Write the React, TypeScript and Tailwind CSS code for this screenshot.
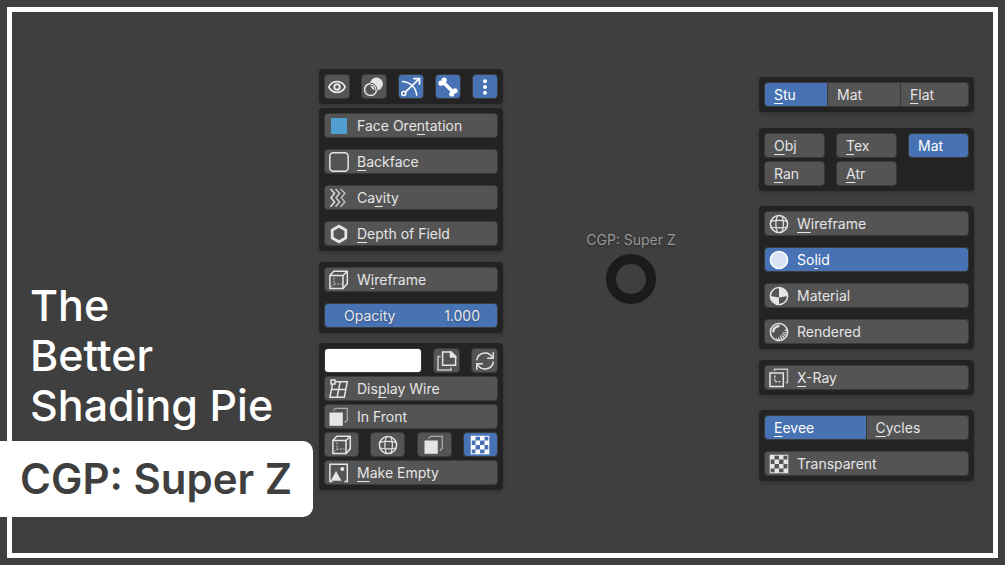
import type { ReactNode } from 'react';
import { useState } from 'react';
import clsx from 'clsx';

function Icon({ children }: { children: ReactNode }) {
  return (
    <svg
      viewBox="0 0 20 20"
      className="size-5 shrink-0"
      fill="none"
      stroke="currentColor"
      strokeWidth="1.5"
      aria-hidden="true"
    >
      {children}
    </svg>
  );
}

const EyeIcon = () => (
  <Icon>
    <path
      d="M1.8 10C3.6 6.4 6.6 4.7 10 4.7S16.4 6.4 18.2 10C16.4 13.6 13.4 15.3 10 15.3S3.6 13.6 1.8 10Z"
      strokeWidth="1.7"
    />
    <circle cx="10" cy="10" r="2.7" strokeWidth="2" />
  </Icon>
);

const OverlayIcon = () => (
  <Icon>
    <clipPath id="overlay-disc">
      <circle cx="12.5" cy="7" r="6.4" />
    </clipPath>
    <circle cx="6.6" cy="12.6" r="6" />
    <circle cx="12.5" cy="7" r="6.4" fill="currentColor" stroke="none" />
    <circle cx="6.6" cy="12.6" r="6.3" stroke="#545454" strokeWidth="1" clipPath="url(#overlay-disc)" />
    <circle cx="6.6" cy="12.6" r="4.3" stroke="#545454" strokeWidth="1" clipPath="url(#overlay-disc)" />
  </Icon>
);

const GizmoIcon = () => (
  <Icon>
    <path d="M.8 4.5C9 4.8 15.2 10 15.7 18.8" />
    <circle cx="2.8" cy="16.6" r="2" />
    <path d="M4.3 15.1 18 2M12.3 1.6H18.5V7.8" strokeWidth="1.7" />
  </Icon>
);

const BoneIcon = () => (
  <Icon>
    <path d="M4.5 4.5 15.5 15.5" strokeWidth="3.6" />
    <g fill="currentColor" stroke="none">
      <circle cx="6.2" cy="3" r="2.6" />
      <circle cx="3" cy="6.2" r="2.6" />
      <circle cx="17" cy="13.8" r="2.6" />
      <circle cx="13.8" cy="17" r="2.6" />
    </g>
  </Icon>
);

const DotsIcon = () => (
  <Icon>
    <g fill="currentColor" stroke="none">
      <circle cx="10" cy="4.3" r="2" />
      <circle cx="10" cy="10" r="2" />
      <circle cx="10" cy="15.7" r="2" />
    </g>
  </Icon>
);

const SwatchIcon = () => (
  <Icon>
    <rect x="2" y="2" width="16" height="16" fill="#519fd0" stroke="none" />
  </Icon>
);

const BackfaceIcon = () => (
  <Icon>
    <rect x=".8" y=".8" width="18.4" height="18.4" rx="3.5" />
  </Icon>
);

const CavityIcon = () => (
  <Icon>
    <path d="M1.5 1 5.6 5.3 2 9.7 5.6 14 1.5 18.8" />
    <path d="M6.5 1 10.6 5.3 7 9.7 10.6 14 6.5 18.8" opacity=".85" />
    <path d="M11.5 1 15.9 5.3 12.3 9.7 15.9 14 11.5 18.8" opacity=".7" />
  </Icon>
);

const HexagonIcon = () => (
  <Icon>
    <path d="M10 2.2 16.8 6.1V13.9L10 17.8 3.2 13.9V6.1Z" strokeWidth="2.8" />
  </Icon>
);

const CubeIcon = () => (
  <Icon>
    <path d="M.9 5.5H14V18.5H.9ZM.9 5.5 4.7 1.3H18.3V13.6L14 18.5M14 5.5 18.3 1.3" />
    <path d="M5 7.5V14H12.5M5 14 2 17.2" strokeWidth="1" strokeDasharray="2 1.2" opacity=".8" />
  </Icon>
);

const CopyIcon = () => (
  <Icon>
    <path d="M5.6 1H14.2L18.6 5.4V14.2H5.6Z" />
    <path d="M13.5 1V6.1H18.6Z" fill="currentColor" />
    <path d="M3.5 5.5H1V19H14V16.5" opacity=".8" />
  </Icon>
);

const RefreshIcon = () => (
  <Icon>
    <path d="M1.7 9.4A8.3 8.3 0 0 1 17.3 6.5M18.3 10.6A8.3 8.3 0 0 1 2.7 13.5" />
    <path d="M18.2 1.3V7.3H12.2M1.8 18.7V12.7H7.8" />
  </Icon>
);

const LatticeIcon = () => (
  <Icon>
    <path d="M4 2.7H18.3L15.3 18.3H.9ZM11.2 2.7 8.1 18.3M2.5 10.5H16.8" />
    <rect x="2" y="1" width="4" height="4" fill="#545454" />
  </Icon>
);

const FrontIcon = () => (
  <Icon>
    <rect x=".5" y="5.5" width="13.3" height="13.3" fill="currentColor" stroke="none" />
    <path d="M4.5 3.6 6.5 1.3H18.3V13L15.7 15.7" strokeWidth="1.3" opacity=".6" />
  </Icon>
);

const GlobeIcon = () => (
  <Icon>
    <circle cx="10" cy="10" r="8.6" />
    <path
      d="M8.6 1.5C6.2 6 6.2 14 8.6 18.5M13 1.9C14.6 6.5 14.6 13.5 13 18.1M1.8 7.3C6 6.3 14 6.3 18.2 7.3M1.9 13C6 13.9 14 13.9 18.1 13"
      strokeWidth="1.2"
    />
  </Icon>
);

const SolidIcon = () => (
  <Icon>
    <circle cx="10" cy="10" r="8.6" fill="#d9e2f2" />
  </Icon>
);

const MaterialIcon = () => (
  <Icon>
    <circle cx="10" cy="10" r="8.6" />
    <path d="M10 1.4A8.6 8.6 0 0 1 18.6 10L10 11.6Z" fill="currentColor" stroke="none" />
    <path d="M1.4 10 10 11.6V18.6A8.6 8.6 0 0 1 1.4 10Z" fill="currentColor" stroke="none" />
  </Icon>
);

const RenderedIcon = () => (
  <Icon>
    <circle cx="10" cy="10" r="8.6" />
    <path d="M4.2 9.5C4.6 6.7 6.6 4.7 9.5 4.2" strokeWidth="2.2" strokeLinecap="round" />
    <path d="M17 7.5C17 13 13 17 7.5 17" strokeWidth="2.6" strokeDasharray="1.2 1.2" />
    <path d="M14.6 10.5C14 12.7 12.7 14 10.5 14.6" strokeWidth="1.4" strokeDasharray="1 1.2" />
  </Icon>
);

const XrayIcon = () => (
  <Icon>
    <path d="M1 5H14.3V18.5H1Z" />
    <path d="M5.5 3V1.2H18.5V14.5H16.5" opacity=".75" />
    <path d="M5.8 7.5V13.7H12" strokeWidth="1.3" strokeDasharray="2 1.2" />
  </Icon>
);

const CheckerIcon = () => (
  <Icon>
    <rect x="1.2" y="1.2" width="17.6" height="17.6" strokeWidth="1" />
    <g fill="currentColor" stroke="none">
      {[0, 1, 2, 3].flatMap((row) =>
        [0, 1, 2, 3]
          .filter((col) => (row + col) % 2 === 0)
          .map((col) => <rect key={`${row}-${col}`} x={1 + col * 4.5} y={1 + row * 4.5} width="4.5" height="4.5" />),
      )}
    </g>
  </Icon>
);

const ImageIcon = () => (
  <Icon>
    <path d="M3.5 18.5H.9V1.2H18.3V18.5H15.5" />
    <path d="M1.8 17.8 7 8 12.5 17.8Z" fill="currentColor" stroke="none" />
    <circle cx="13.3" cy="6" r="2" fill="currentColor" stroke="none" />
  </Icon>
);

// "_" in front of a letter marks the access key
function KeyLabel({ text }: { text: string }) {
  const at = text.indexOf('_');
  if (at < 0) return <span>{text}</span>;
  return (
    <span>
      {text.slice(0, at)}
      <u className="decoration-1 underline-offset-3 [text-decoration-skip-ink:none]">{text[at + 1]}</u>
      {text.slice(at + 2)}
    </span>
  );
}

function Panel({ className, children }: { className?: string; children: ReactNode }) {
  return (
    <section className={clsx('flex flex-col rounded bg-[#232323] p-[5px] shadow-[0_2px_4px_rgba(0,0,0,0.2)]', className)}>
      {children}
    </section>
  );
}

interface ToggleProps {
  label?: string;
  title?: string;
  icon?: ReactNode;
  on?: boolean;
  className?: string;
}

function Toggle({ label, title, icon, on = false, className = 'rounded' }: ToggleProps) {
  const [active, setActive] = useState(on);
  return (
    <button
      type="button"
      aria-pressed={active}
      aria-label={title}
      onClick={() => setActive(!active)}
      className={clsx(
        'flex h-[25px] items-center border border-[#3a3a3a]',
        label ? 'gap-2' : 'justify-center',
        label && (icon ? 'px-1' : 'px-[9px]'),
        active ? 'bg-[#4772b3] text-white' : 'bg-[#545454] text-[#e5e5e5]',
        className,
      )}
    >
      {icon}
      {label && <KeyLabel text={label} />}
    </button>
  );
}

function OpacitySlider() {
  const [value, setValue] = useState(1);
  return (
    <div className="relative h-[25px]">
      <input
        id="opacity"
        type="range"
        min={0}
        max={1}
        step={0.001}
        value={value}
        onChange={(e) => setValue(Number(e.target.value))}
        className="block size-full appearance-none rounded border border-[#3a3a3a] bg-[#4772b3] [&::-webkit-slider-thumb]:opacity-0"
      />
      <div className="pointer-events-none absolute inset-0 flex items-center justify-between pr-[18px] pl-5 text-[#e8e8e8]">
        <label htmlFor="opacity">Opacity</label>
        <output htmlFor="opacity">{value.toFixed(3)}</output>
      </div>
    </div>
  );
}

function OverlayColumn() {
  return (
    <div className="flex w-[184px] shrink-0 flex-col pt-[69px]">
      <Panel>
        <div className="flex justify-between">
          <Toggle title="Visibility" icon={<EyeIcon />} className="w-[26px] rounded" />
          <Toggle title="Overlays" icon={<OverlayIcon />} className="w-[26px] rounded" />
          <Toggle title="Gizmos" icon={<GizmoIcon />} on className="w-[26px] rounded" />
          <Toggle title="Bones" icon={<BoneIcon />} on className="w-[26px] rounded" />
          <Toggle title="More" icon={<DotsIcon />} on className="w-[26px] rounded" />
        </div>
      </Panel>
      <Panel className="mt-1 gap-[11px]">
        <Toggle label="Face Ore_ntation" icon={<SwatchIcon />} />
        <Toggle label="_Backface" icon={<BackfaceIcon />} />
        <Toggle label="Ca_vity" icon={<CavityIcon />} />
        <Toggle label="_Depth of Field" icon={<HexagonIcon />} />
      </Panel>
      <Panel className="mt-[11px] gap-[11px]">
        <Toggle label="W_ireframe" icon={<CubeIcon />} />
        <OpacitySlider />
      </Panel>
      <Panel className="mt-[10px] gap-[3px]">
        <div className="flex gap-[11px]">
          <input
            type="color"
            aria-label="Object color"
            defaultValue="#ffffff"
            className="h-[25px] min-w-0 flex-1 appearance-none rounded border border-[#3a3a3a] bg-white p-0 [&::-webkit-color-swatch]:border-0 [&::-webkit-color-swatch-wrapper]:p-0"
          />
          <Toggle title="Copy color" icon={<CopyIcon />} className="w-[27px] rounded" />
          <Toggle title="Reset color" icon={<RefreshIcon />} className="w-[27px] rounded" />
        </div>
        <Toggle label="Dis_play Wire" icon={<LatticeIcon />} />
        <Toggle label="In Front" icon={<FrontIcon />} />
        <div className="flex justify-between">
          <Toggle title="Bounds" icon={<CubeIcon />} className="w-[35px] rounded" />
          <Toggle title="Wire" icon={<GlobeIcon />} className="w-[35px] rounded" />
          <Toggle title="Solid" icon={<FrontIcon />} className="w-[35px] rounded" />
          <Toggle title="Textured" icon={<CheckerIcon />} on className="w-[35px] rounded" />
        </div>
        <Toggle label="_Make Empty" icon={<ImageIcon />} />
      </Panel>
    </div>
  );
}

function ShadingColumn() {
  return (
    <div className="flex w-[215px] shrink-0 flex-col pt-[77px]">
      <Panel>
        <div className="grid grid-cols-[64fr_73fr_68fr]">
          <Toggle label="_Stu" on className="rounded-l" />
          <Toggle label="Mat" className="border-l-0" />
          <Toggle label="_Flat" className="rounded-r border-l-0" />
        </div>
      </Panel>
      <Panel className="mt-4">
        <div className="grid grid-cols-3 gap-x-[11px] gap-y-[3px]">
          <Toggle label="_Obj" />
          <Toggle label="_Tex" />
          <Toggle label="Mat" on />
          <Toggle label="_Ran" />
          <Toggle label="_Atr" />
        </div>
      </Panel>
      <Panel className="mt-[15px] gap-[11px]">
        <Toggle label="_Wireframe" icon={<GlobeIcon />} />
        <Toggle label="So_lid" icon={<SolidIcon />} on />
        <Toggle label="Material" icon={<MaterialIcon />} />
        <Toggle label="Rendered" icon={<RenderedIcon />} />
      </Panel>
      <Panel className="mt-[11px]">
        <Toggle label="_X-Ray" icon={<XrayIcon />} />
      </Panel>
      <Panel className="mt-[15px] gap-[11px]">
        <div className="grid grid-cols-2">
          <Toggle label="_Eevee" on className="rounded-l" />
          <Toggle label="_Cycles" className="rounded-r border-l-0" />
        </div>
        <Toggle label="Transparent" icon={<CheckerIcon />} />
      </Panel>
    </div>
  );
}

export default function App() {
  return (
    <main className="relative flex min-h-screen bg-[#3f3f3f] pr-[31px] font-['Inter',sans-serif]">
      <div className="pointer-events-none absolute inset-[7px] border-5 border-white" />

      <header className="relative flex w-[319px] shrink-0 flex-col justify-end pb-12">
        <h1 className="mb-[11px] pl-[30px] text-[43px] leading-[50px] font-medium whitespace-nowrap text-white">
          The
          <br />
          Better
          <br />
          Shading Pie
        </h1>
        <p className="mr-[6px] rounded-r-[10px] bg-white pl-5 text-[42px] leading-[76px] font-semibold whitespace-nowrap text-[#3f3f3f]">
          CGP: Super Z
        </p>
      </header>

      <div className="relative flex flex-1 text-[14px] leading-5 [text-shadow:0_1px_2px_rgba(0,0,0,0.35)]">
        <OverlayColumn />
        <div className="flex flex-1 flex-col items-center gap-1 pt-[230px]">
          <p className="text-[#979797]">CGP: Super Z</p>
          <div className="size-[50px] rounded-full border-10 border-[#1b1b1b]" />
        </div>
        <ShadingColumn />
      </div>
    </main>
  );
}
